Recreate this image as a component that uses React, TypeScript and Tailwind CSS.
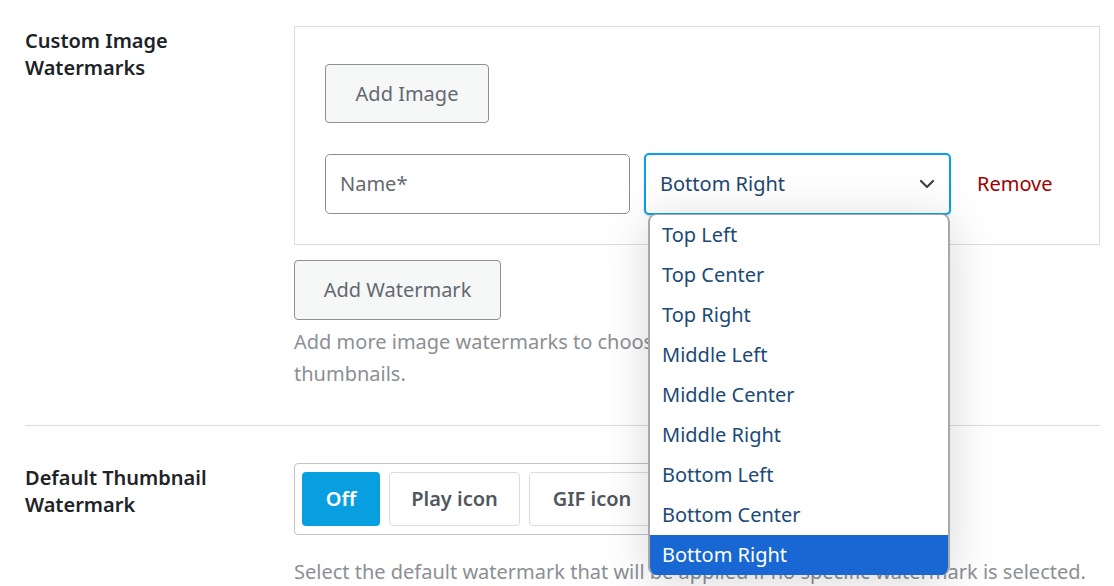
import React from "react";

const options = [
  "Top Left",
  "Top Center",
  "Top Right",
  "Middle Left",
  "Middle Center",
  "Middle Right",
  "Bottom Left",
  "Bottom Center",
  "Bottom Right",
];

export default function App() {
  return (
    <div
      className="relative w-[1114px] h-[586px] overflow-hidden bg-white text-[20px]"
      style={{ fontFamily: '"Noto Sans", "Open Sans", sans-serif' }}
    >
      <div className="pl-[25px] pr-[14px] pt-[26px]">
        {/* Row 1 */}
        <div className="flex pb-[35px] border-b border-[#dcdcde]">
          <div className="w-[269px] shrink-0 pt-[1px] font-semibold text-[#1d2327] leading-[27px]">
            Custom Image
            <br />
            Watermarks
          </div>
          <div className="flex-1">
            <div className="border border-[#dcdcde] pl-[30px] pr-[30px] pt-[37px] pb-[29px]">
              <button className="w-[164px] h-[59px] rounded-[4px] border border-[#8c8f94] bg-[#f6f7f7] text-[#646970] leading-none">
                Add Image
              </button>
              <div className="flex items-center mt-[30px]">
                <div className="w-[305px] h-[60px] rounded-[5px] border border-[#8c8f94] flex items-center pl-[14px] text-[#646970]">
                  Name*
                </div>
                <div className="ml-[14px] w-[307px] h-[62px] rounded-[5px] border-2 border-[#0ba0df] flex items-center justify-between pl-[14px] pr-[14px] text-[#1e4870] shadow-[0_1px_2px_rgba(0,60,120,0.25)]">
                  <span>Bottom Right</span>
                  <svg width="16" height="10" viewBox="0 0 16 10" fill="none">
                    <path d="M2 2l6 6 6-6" stroke="#3c434a" strokeWidth="2.2" strokeLinecap="round" strokeLinejoin="round" />
                  </svg>
                </div>
                <span className="ml-[26px] text-[#a00000]">Remove</span>
              </div>
            </div>
            <button className="mt-[15px] w-[207px] h-[60px] rounded-[4px] border border-[#8c8f94] bg-[#f6f7f7] text-[#646970] leading-none">
              Add Watermark
            </button>
            <p className="mt-[6px] leading-[32px] text-[#8c8f94] w-[540px]">
              Add more image watermarks to choose from for your thumbnails.
            </p>
          </div>
        </div>

        {/* Row 2 */}
        <div className="flex pt-[37px]">
          <div className="w-[269px] shrink-0 pt-[1px] font-semibold text-[#1d2327] leading-[27px]">
            Default Thumbnail
            <br />
            Watermark
          </div>
          <div className="flex-1">
            <div className="inline-flex gap-[9px] rounded-[4px] border border-[#c3c4c7] pl-[7px] pr-[8px] py-[8px]">
              <button className="w-[78px] h-[54px] rounded-[4px] bg-[#089fe0] text-white font-semibold">
                Off
              </button>
              <button className="w-[131px] h-[54px] rounded-[4px] border border-[#dcdcde] bg-white text-[#50575e] font-semibold">
                Play icon
              </button>
              <button className="w-[126px] h-[54px] rounded-[4px] border border-[#dcdcde] bg-white text-[#50575e] font-semibold">
                GIF icon
              </button>
            </div>
            <p className="mt-[21px] leading-[32px] text-[#8c8f94] whitespace-nowrap">
              Select the default watermark that will be applied if no specific watermark is selected.
            </p>
          </div>
        </div>
      </div>

      {/* Open dropdown list */}
      <div className="absolute left-[648px] top-[214px] w-[302px] rounded-[8px] border-x-2 border-t border-[#a8a8a8] bg-white overflow-hidden shadow-[0_6px_48px_rgba(0,0,0,0.16)]">
        {options.map((o) => (
          <div
            key={o}
            className={
              o === "Bottom Right"
                ? "h-[40px] flex items-center pl-[12px] bg-[#1967d2] text-white"
                : "h-[40px] flex items-center pl-[12px] text-[#1b4a76]"
            }
          >
            {o}
          </div>
        ))}
      </div>
    </div>
  );
}
